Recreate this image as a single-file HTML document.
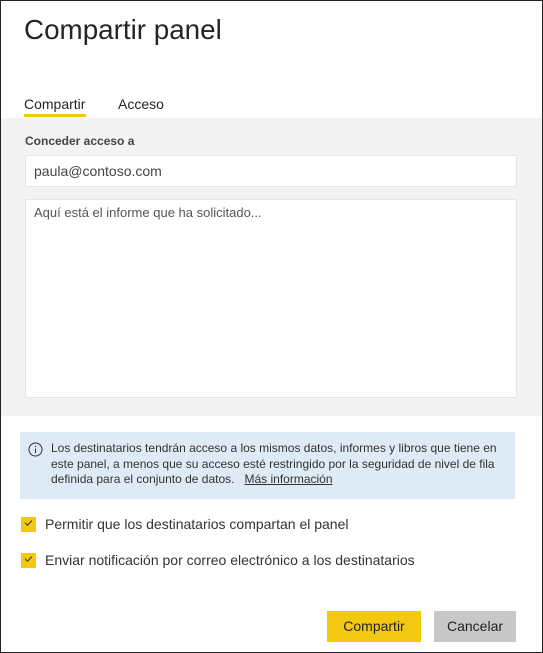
<!DOCTYPE html>
<html><head><meta charset="utf-8"><style>
*{box-sizing:border-box;margin:0;padding:0}
body{width:543px;height:653px;background:#fff;font-family:"Liberation Sans",sans-serif;color:#333;position:relative;overflow:hidden}
.frame{position:absolute;left:0;top:0;width:543px;height:653px;border:1px solid #222;pointer-events:none;z-index:9}
.abs{position:absolute}
h1{position:absolute;left:24px;top:14px;font-size:27.8px;font-weight:normal;color:#252525}
.tab{position:absolute;top:96px;font-size:14px;color:#252525}
.gray{position:absolute;left:1px;top:118px;width:541px;height:298px;background:#f3f3f3}
.inp{position:absolute;left:25px;width:492px;background:#fff;border:1px solid #e6e6e6;font-size:14px;color:#444;padding-left:8px}
.info{position:absolute;left:20px;top:432px;width:495px;height:67px;background:#deeaf5;font-size:12px;line-height:15.5px;color:#333;padding:9px 0 0 31px}
.cb{position:absolute;left:21px;width:15px;height:15px;background:#f2c811}
.cb::after{content:"";position:absolute;left:4px;top:3px;width:6px;height:3px;border-left:1.3px solid #333;border-bottom:1.3px solid #333;transform:rotate(-45deg)}
.lbl{position:absolute;left:45px;font-size:14px;color:#333}
.btn{position:absolute;top:611px;height:31px;font-size:14px;color:#222;text-align:center;line-height:31px}
</style></head><body>
<div class="frame"></div>
<h1>Compartir panel</h1>
<div class="tab" style="left:24px">Compartir</div>
<div class="abs" style="left:24px;top:114px;width:62px;height:3px;background:#f2c811"></div>
<div class="tab" style="left:118px">Acceso</div>
<div class="gray"></div>
<div class="abs" style="left:25px;top:134px;font-size:12px;font-weight:bold;color:#444">Conceder acceso a</div>
<div class="inp" style="top:155px;height:32px;line-height:30px">paula@contoso.com</div>
<div class="inp" style="top:199px;height:199px;padding-top:5px;font-size:13px;color:#555">Aquí está el informe que ha solicitado...</div>
<div class="info">
<svg class="abs" style="left:8px;top:10px" width="15" height="15" viewBox="0 0 15 15"><circle cx="7.5" cy="7.5" r="6.5" fill="none" stroke="#333" stroke-width="1"/><line x1="7.5" y1="6.5" x2="7.5" y2="11" stroke="#333"/><circle cx="7.5" cy="4.3" r=".7" fill="#333"/></svg>
Los destinatarios tendrán acceso a los mismos datos, informes y libros que tiene en este panel, a menos que su acceso esté restringido por la seguridad de nivel de fila definida para el conjunto de datos.&nbsp;&nbsp; <span style="text-decoration:underline">Más información</span></div>
<div class="cb" style="top:517px"></div><div class="lbl" style="top:516px">Permitir que los destinatarios compartan el panel</div>
<div class="cb" style="top:553px"></div><div class="lbl" style="top:552px">Enviar notificación por correo electrónico a los destinatarios</div>
<div class="btn" style="left:327px;width:94px;background:#f2c811">Compartir</div>
<div class="btn" style="left:434px;width:82px;background:#c8c8c8">Cancelar</div>
</body></html>
